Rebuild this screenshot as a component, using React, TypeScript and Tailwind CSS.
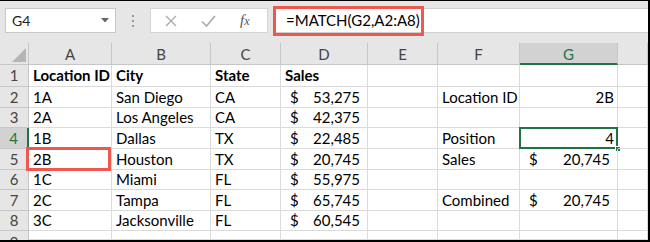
import React from "react";

const COLS = [29, 83, 99, 70, 87, 70, 82, 98];
const HEADERS = ["A", "B", "C", "D", "E", "F", "G", "H"];

type Cell = { t?: string; bold?: boolean; right?: boolean; money?: string };

const ROWS: Cell[][] = [
  [{ t: "Location ID", bold: true }, { t: "City", bold: true }, { t: "State", bold: true }, { t: "Sales", bold: true }, {}, {}, {}],
  [{ t: "1A" }, { t: "San Diego" }, { t: "CA" }, { money: "53,275" }, {}, { t: "Location ID" }, { t: "2B", right: true }],
  [{ t: "2A" }, { t: "Los Angeles" }, { t: "CA" }, { money: "42,375" }, {}, {}, {}],
  [{ t: "1B" }, { t: "Dallas" }, { t: "TX" }, { money: "22,485" }, {}, { t: "Position" }, { t: "4", right: true }],
  [{ t: "2B" }, { t: "Houston" }, { t: "TX" }, { money: "20,745" }, {}, { t: "Sales" }, { money: "20,745" }],
  [{ t: "1C" }, { t: "Miami" }, { t: "FL" }, { money: "55,975" }, {}, {}, {}],
  [{ t: "2C" }, { t: "Tampa" }, { t: "FL" }, { money: "65,745" }, {}, { t: "Combined" }, { money: "20,745" }],
  [{ t: "3C" }, { t: "Jacksonville" }, { t: "FL" }, { money: "60,545" }, {}, {}, {}],
  [{}, {}, {}, {}, {}, {}, {}],
];

const ROW_H = ["h-[22px]", "h-[21px]", "h-[20px]", "h-[21px]", "h-[21px]", "h-[20px]", "h-[21px]", "h-[20px]", "h-[9px]"];

function FormulaBar() {
  return (
    <div className="h-[42px] flex items-start pt-[7px] bg-[#e6e6e6]">
      {/* Name box */}
      <div className="ml-[5px] w-[111px] h-[25px] bg-white border border-[#c8c8c8] flex items-center justify-between pl-[6px] pr-[6px]">
        <span className="text-[14px] text-[#222]">G4</span>
        <svg width="8" height="5" viewBox="0 0 8 5">
          <path d="M0 0 L8 0 L4 4.5 Z" fill="#666" />
        </svg>
      </div>
      {/* Grip dots */}
      <div className="w-[34px] h-[25px] flex flex-col items-center justify-center gap-[3px]">
        <span className="w-[2px] h-[2px] bg-[#9a9a9a]" />
        <span className="w-[2px] h-[2px] bg-[#9a9a9a]" />
        <span className="w-[2px] h-[2px] bg-[#9a9a9a]" />
      </div>
      {/* Buttons box */}
      <div className="w-[118px] h-[25px] bg-white border border-[#d4d4d4] flex items-center">
        <svg className="ml-[14px]" width="12" height="12" viewBox="0 0 12 12">
          <path d="M1 1 L11 11 M11 1 L1 11" stroke="#a8a8a8" strokeWidth="1.3" fill="none" />
        </svg>
        <svg className="ml-[24px]" width="15" height="12" viewBox="0 0 15 12">
          <path d="M1 6.5 L5.5 11 L14 1" stroke="#a8a8a8" strokeWidth="1.6" fill="none" />
        </svg>
        <span className="ml-[24px] text-[15px] italic text-[#555] font-['Liberation_Serif',serif] leading-none">
          f<span className="text-[12px]">x</span>
        </span>
      </div>
      {/* Formula input */}
      <div className="relative ml-[5px] flex-1 h-[25px] bg-white border-y border-[#cfcfcf] flex items-center pl-[13px]">
        <span className="text-[15px] text-black">=MATCH(G2,A2:A8)</span>
        <div className="absolute left-0 -top-[3px] w-[151px] h-[30px] border-[3px] border-[#f0584f]" />
      </div>
    </div>
  );
}

function HeaderRow() {
  return (
    <div className="flex h-[22px]">
      <div className="relative bg-[#e6e6e6] border-r border-b border-[#c6c6c6]" style={{ width: COLS[0] }}>
        <svg className="absolute right-[2px] bottom-[2px]" width="14" height="14" viewBox="0 0 14 14">
          <path d="M14 0 L14 14 L0 14 Z" fill="#b5b5b5" />
        </svg>
      </div>
      {HEADERS.map((h, i) => {
        const sel = h === "G";
        const w = i + 1 < COLS.length ? COLS[i + 1] : undefined;
        return (
          <div
            key={h}
            className={
              sel
                ? "flex items-center justify-center pt-[2px] bg-[#d2d2d2] border-r border-[#c6c6c6] border-b-2 border-b-[#217346] text-[#217346] text-[15px]"
                : `flex items-center justify-center pt-[2px] bg-[#e6e6e6] border-r border-b border-[#c6c6c6] text-[#444] text-[15px] ${w ? "" : "flex-1"}`
            }
            style={w ? { width: w } : undefined}
          >
            {h !== "H" ? h : ""}
          </div>
        );
      })}
    </div>
  );
}

function DataCell({ c, w, row, col }: { c: Cell; w?: number; row: number; col: number }) {
  const isG4 = row === 3 && col === 6;
  const isA5 = row === 4 && col === 0;
  return (
    <div
      className={`relative border-r border-b border-[#dadada] flex items-center text-[15px] text-black whitespace-nowrap ${w ? "" : "flex-1"}`}
      style={w ? { width: w } : undefined}
    >
      {c.money ? (
        <div className="w-full flex justify-between pl-[9px] pr-[7px]">
          <span>$</span>
          <span>{c.money}</span>
        </div>
      ) : c.t ? (
        <div className={`w-full ${c.right ? "text-right pr-[3px]" : "pl-[4px]"} ${c.bold ? "font-bold" : ""}`}>{c.t}</div>
      ) : null}
      {isG4 && (
        <>
          <div className="absolute -left-[1px] -top-[1px] -right-[1px] -bottom-[1px] border-2 border-[#217346]" />
          <div className="absolute -right-[4px] -bottom-[4px] w-[6px] h-[6px] bg-[#217346] border border-white" />
        </>
      )}
      {isA5 && <div className="absolute -left-[3px] -top-[2px] right-0 -bottom-[2px] border-[3px] border-[#f0584f]" />}
    </div>
  );
}

export default function App() {
  return (
    <div className="w-[650px] h-[242px] overflow-hidden bg-white border-t border-r-2 border-b-2 border-black font-['Lato',sans-serif]">
      <FormulaBar />
      <HeaderRow />
      {ROWS.map((r, ri) => {
        const last = ri === ROWS.length - 1;
        return (
          <div key={ri} className={`flex ${ROW_H[ri]}`}>
            <div
              className={
                ri === 3
                  ? "flex items-center justify-center bg-[#d2d2d2] border-r-2 border-r-[#217346] border-b border-b-[#c6c6c6] text-[#217346] text-[15px]"
                  : last
                  ? "flex items-start justify-center overflow-hidden pt-[2px] leading-[18px] bg-[#e6e6e6] border-r border-[#c6c6c6] text-[#444] text-[15px]"
                  : "flex items-center justify-center bg-[#e6e6e6] border-r border-b border-[#c6c6c6] text-[#444] text-[15px]"
              }
              style={{ width: COLS[0] }}
            >
              {ri + 1}
            </div>
            {[...r, {}].map((c, ci) => (
              <DataCell key={ci} c={c} w={ci + 1 < COLS.length ? COLS[ci + 1] : undefined} row={ri} col={ci} />
            ))}
          </div>
        );
      })}
    </div>
  );
}
